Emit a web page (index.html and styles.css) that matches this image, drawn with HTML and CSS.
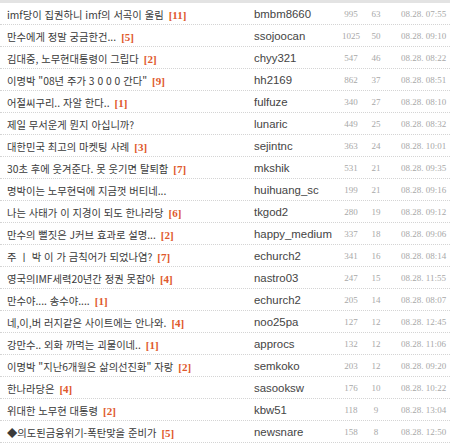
FILE: index.html
```html
<!DOCTYPE html>
<html lang="ko">
<head>
<meta charset="utf-8">
<title>list</title>
<link rel="stylesheet" href="styles.css">
</head>
<body>
<div class="list">
  <div class="row"><span class="title">imf당이 집권하니 imf의 서곡이 울림<b class="cnt">[11]</b></span><span class="author">bmbm8660</span><span class="num">995</span><span class="num">63</span><span class="date">08.28. 07:55</span></div>
  <div class="row"><span class="title">만수에게 정말 궁금한건...<b class="cnt">[5]</b></span><span class="author">ssojoocan</span><span class="num">1025</span><span class="num">50</span><span class="date">08.28. 09:10</span></div>
  <div class="row"><span class="title">김대중, 노무현대통령이 그립다<b class="cnt">[2]</b></span><span class="author">chyy321</span><span class="num">547</span><span class="num">46</span><span class="date">08.28. 08:22</span></div>
  <div class="row"><span class="title">이명박 "08년 주가 3 0 0 0 간다"<b class="cnt">[9]</b></span><span class="author">hh2169</span><span class="num">862</span><span class="num">37</span><span class="date">08.28. 08:51</span></div>
  <div class="row"><span class="title">어절씨구리.. 자알 한다..<b class="cnt">[1]</b></span><span class="author">fulfuze</span><span class="num">340</span><span class="num">27</span><span class="date">08.28. 08:10</span></div>
  <div class="row"><span class="title">제일 무서운게 뭔지 아십니까?</span><span class="author">lunaric</span><span class="num">449</span><span class="num">25</span><span class="date">08.28. 08:32</span></div>
  <div class="row"><span class="title">대한민국 최고의 마켓팅 사례<b class="cnt">[3]</b></span><span class="author">sejintnc</span><span class="num">363</span><span class="num">24</span><span class="date">08.28. 10:01</span></div>
  <div class="row"><span class="title">30초 후에 웃겨준다. 못 웃기면 탈퇴함<b class="cnt">[7]</b></span><span class="author">mkshik</span><span class="num">531</span><span class="num">21</span><span class="date">08.28. 09:35</span></div>
  <div class="row"><span class="title">명박이는 노무현덕에 지금껏 버티네...</span><span class="author">huihuang_sc</span><span class="num">199</span><span class="num">21</span><span class="date">08.28. 09:16</span></div>
  <div class="row"><span class="title">나는 사태가 이 지경이 되도 한나라당<b class="cnt">[6]</b></span><span class="author">tkgod2</span><span class="num">280</span><span class="num">19</span><span class="date">08.28. 09:12</span></div>
  <div class="row"><span class="title">만수의 뻘짓은 J커브 효과로 설명...<b class="cnt">[2]</b></span><span class="author">happy_medium</span><span class="num">337</span><span class="num">18</span><span class="date">08.28. 09:06</span></div>
  <div class="row"><span class="title">주 ㅣ 박 이 가 금칙어가 되었나염?<b class="cnt">[7]</b></span><span class="author">echurch2</span><span class="num">341</span><span class="num">16</span><span class="date">08.28. 08:14</span></div>
  <div class="row"><span class="title">영국의IMF세력20년간 정권 못잡아<b class="cnt">[4]</b></span><span class="author">nastro03</span><span class="num">247</span><span class="num">15</span><span class="date">08.28. 11:55</span></div>
  <div class="row"><span class="title">만수야.... 송수야....<b class="cnt">[1]</b></span><span class="author">echurch2</span><span class="num">205</span><span class="num">14</span><span class="date">08.28. 08:07</span></div>
  <div class="row"><span class="title">네,이,버 러지같은 사이트에는 안나와.<b class="cnt">[4]</b></span><span class="author">noo25pa</span><span class="num">127</span><span class="num">12</span><span class="date">08.28. 12:45</span></div>
  <div class="row"><span class="title">강만수.. 외화 까먹는 괴물이네..<b class="cnt">[1]</b></span><span class="author">approcs</span><span class="num">132</span><span class="num">12</span><span class="date">08.28. 11:06</span></div>
  <div class="row"><span class="title">이명박 "지난6개월은 삶의선진화" 자랑<b class="cnt">[2]</b></span><span class="author">semkoko</span><span class="num">203</span><span class="num">12</span><span class="date">08.28. 09:20</span></div>
  <div class="row"><span class="title">한나라당은<b class="cnt">[4]</b></span><span class="author">sasooksw</span><span class="num">176</span><span class="num">10</span><span class="date">08.28. 10:22</span></div>
  <div class="row"><span class="title">위대한 노무현 대통령<b class="cnt">[2]</b></span><span class="author">kbw51</span><span class="num">118</span><span class="num">9</span><span class="date">08.28. 13:04</span></div>
  <div class="row"><span class="title">◆의도된금융위기-폭탄맞을 준비가<b class="cnt">[5]</b></span><span class="author">newsnare</span><span class="num">158</span><span class="num">8</span><span class="date">08.28. 12:50</span></div>
</div>
</body>
</html>
```
FILE: styles.css
```css
html, body {
  margin: 0;
  padding: 0;
  background: #fff;
}
.list {
  border-top: 3px solid #e3e3e3;
  width: 450px;
}
.row {
  display: grid;
  grid-template-columns: 247px 84px 26px 24px 1fr;
  align-items: center;
  height: 21px;
  padding-left: 7px;
  border-bottom: 1px dotted #d4d4d4;
  white-space: nowrap;
  overflow: hidden;
}
.title {
  font-family: "Noto Sans CJK KR", "Liberation Sans", sans-serif;
  font-size: 10.3px;
  color: #3a3a3a;
  overflow: hidden;
  padding-top: 1px;
}
.cnt {
  font-family: "Liberation Serif", serif;
  font-weight: bold;
  font-size: 11px;
  color: #e0582c;
  margin-left: 5px;
}
.author {
  font-family: "Liberation Sans", sans-serif;
  font-size: 11.4px;
  color: #444;
  padding-top: 1px;
}
.num {
  font-family: "Liberation Serif", serif;
  font-size: 9px;
  color: #a8a8a8;
  text-align: center;
  padding-top: 1px;
}
.date {
  font-family: "Liberation Serif", serif;
  font-size: 9px;
  color: #a8a8a8;
  padding-left: 13px;
  padding-top: 1px;
}
```
